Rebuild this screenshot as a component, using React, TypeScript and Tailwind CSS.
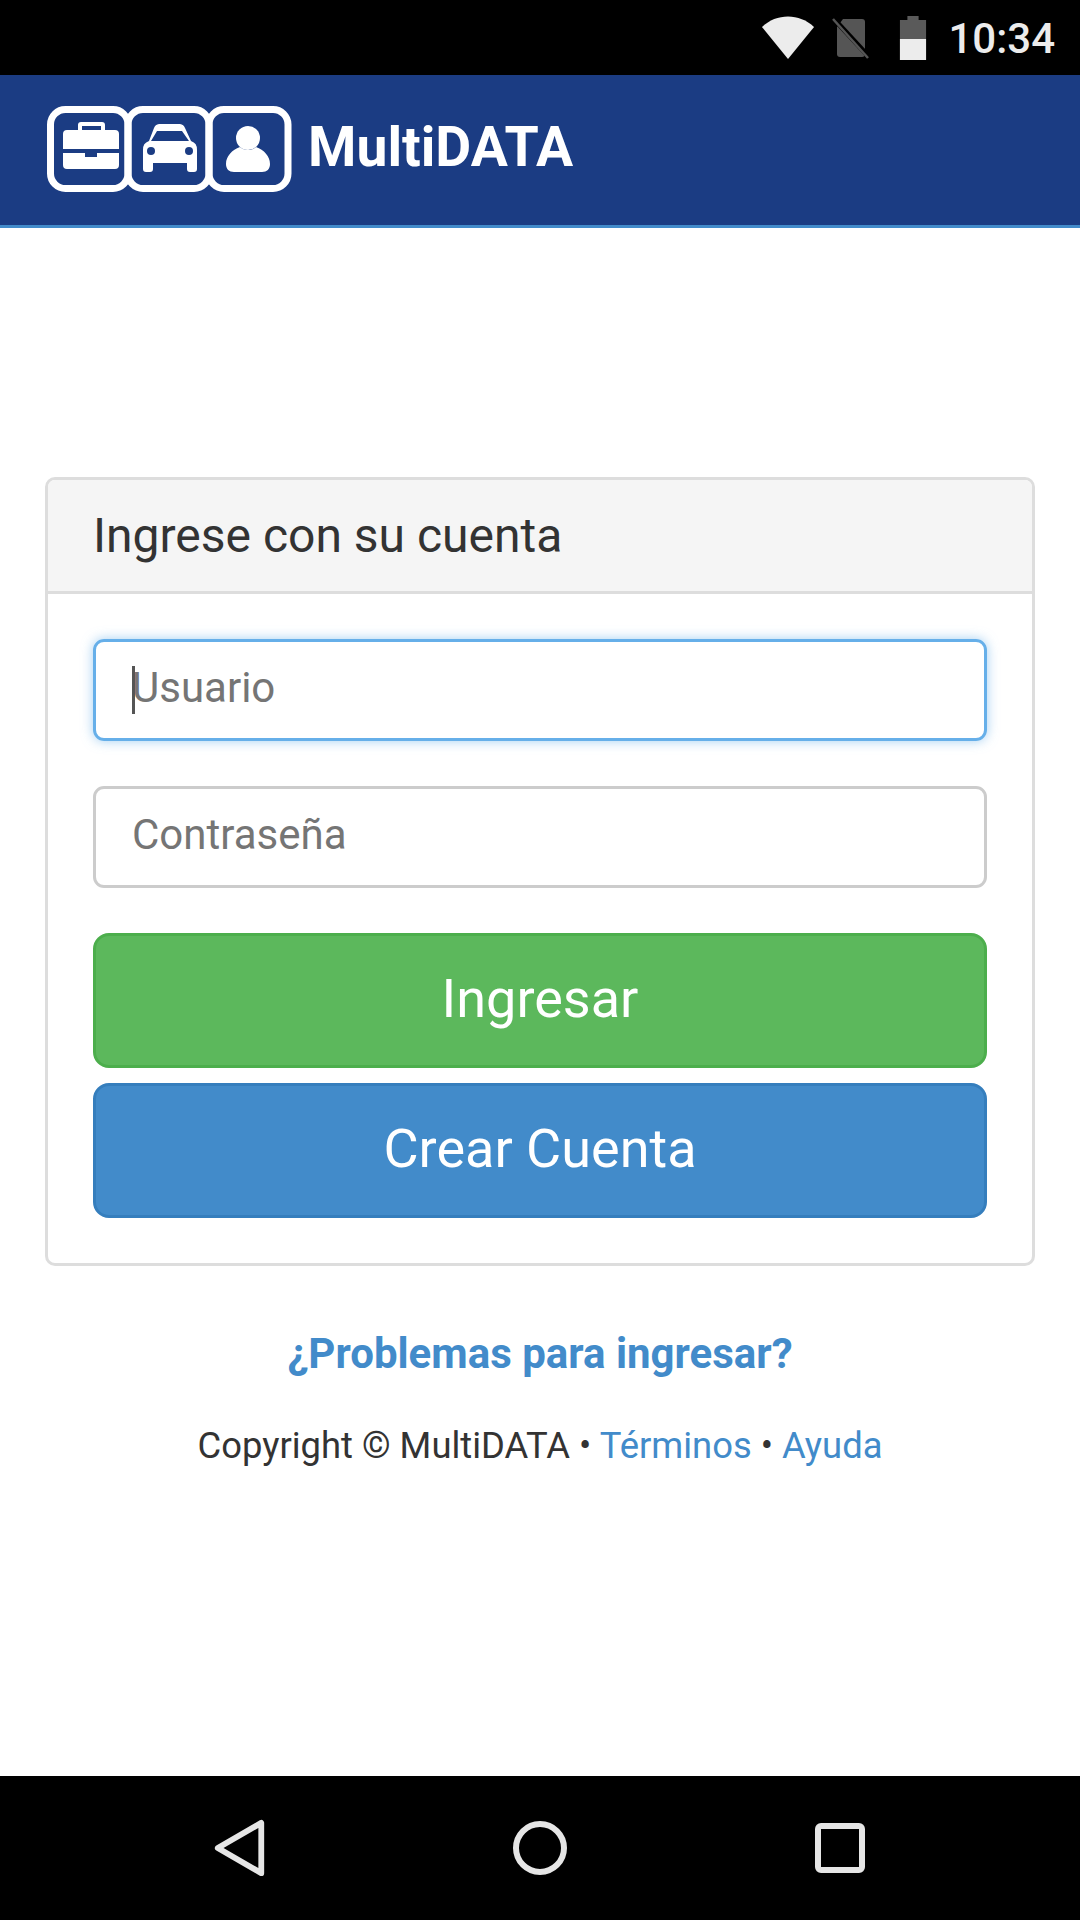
export default function App() {
  return (
    <div className="w-[1080px] h-[1920px] flex flex-col bg-white font-['Roboto',sans-serif] text-[#333] overflow-hidden">
      <div className="h-[75px] bg-black flex items-center justify-end pr-[25px] shrink-0">
        <svg width="54" height="44" viewBox="0 0 56 44" className="mr-[17px]" preserveAspectRatio="none">
          <path d="M1 11 C16 -3 40 -3 55 11 L28 43 Z" fill="#ececec" />
        </svg>
        <svg width="40" height="44" viewBox="0 0 40 44" className="mr-[27px]">
          <path d="M11 3 H30 a3 3 0 0 1 3 3 V38 a3 3 0 0 1 -3 3 H8 a3 3 0 0 1 -3 -3 V11 Z" fill="#555" />
          <path d="M1 2 L38 42" stroke="#000" strokeWidth="5" />
          <path d="M1 3 L36 42" stroke="#555" strokeWidth="2.5" />
        </svg>
        <svg width="28" height="44" viewBox="0 0 30 44" className="mr-[21px]" preserveAspectRatio="none">
          <path d="M9 0 H21 V4 H29 V44 H1 V4 H9 Z" fill="#5a5a5a" />
          <rect x="1" y="23" width="28" height="21" fill="#ececec" />
        </svg>
        <span className="text-[42px] leading-none font-medium text-[#ececec] mt-[3px]">10:34</span>
      </div>

      <div className="h-[153px] bg-[#1b3c83] border-b-[3px] border-[#428bca] flex items-center pl-[46px] shrink-0">
        <svg width="246" height="86" viewBox="0 0 246 86" className="mt-[-2px]">
          <g fill="none" stroke="#fff" strokeWidth="7">
            <rect x="4.5" y="3.5" width="77.5" height="79" rx="15" />
            <rect x="82" y="3.5" width="81" height="79" rx="15" />
            <rect x="163" y="3.5" width="79" height="79" rx="15" />
          </g>
          <g fill="#fff">
            <path d="M32 19 a3 3 0 0 1 3 -3 H56 a3 3 0 0 1 3 3 V24 H69 a4 4 0 0 1 4 4 V43 H17 V28 a4 4 0 0 1 4 -4 H32 Z M36 20 V24 H55 V20 Z" fillRule="evenodd" />
            <path d="M17 47 H39 V51 H51 V47 H73 V59 a4 4 0 0 1 -4 4 H21 a4 4 0 0 1 -4 -4 Z" />
            <path d="M103 35 L108 22 a6 6 0 0 1 5 -4 H134 a6 6 0 0 1 5 4 L145 35 a9 9 0 0 1 6 9 V56 H151 V63 a3 3 0 0 1 -3 3 H144 a3 3 0 0 1 -3 -3 V57 H107 V63 a3 3 0 0 1 -3 3 H100 a3 3 0 0 1 -3 -3 V56 V44 a9 9 0 0 1 6 -9 Z M105 35 H143 L136 25 H111 Z" fillRule="evenodd" />
            <circle cx="202" cy="32" r="12" />
            <path d="M180 58 C180 50 186 44 194 41 C198 45 206 45 210 41 C218 44 224 50 224 58 C224 63 221 66 216 66 H188 C183 66 180 63 180 58 Z" />
          </g>
          <circle cx="105" cy="45" r="4" fill="#1b3c83" />
          <circle cx="143" cy="45" r="4" fill="#1b3c83" />
        </svg>
        <span className="ml-[16px] text-[55.3px] leading-none font-bold text-white mt-[-4px]">MultiDATA</span>
      </div>

      <div className="flex-1 flex flex-col items-center pt-[249px]">
        <div className="w-[990px] h-[789px] border-[3px] border-[#ddd] rounded-[10px] bg-white overflow-hidden flex flex-col shrink-0">
          <div className="h-[114px] bg-[#f5f5f5] border-b-[3px] border-[#ddd] pl-[45px] flex items-center text-[48px] leading-none shrink-0">
            Ingrese con su cuenta
          </div>
          <div className="flex flex-col pt-[45px] px-[45px]">
            <div className="relative h-[102px] border-[3px] border-[#66afe9] rounded-[11px] shadow-[0_0_12px_rgba(102,175,233,0.6)] flex items-center pl-[36px] pb-[5px] text-[42px] text-[#757575]">
              <span className="absolute left-[36px] top-[24px] w-[3px] h-[48px] bg-[#555]" />
              Usuario
            </div>
            <div className="mt-[45px] h-[102px] border-[3px] border-[#ccc] rounded-[11px] flex items-center pl-[36px] pb-[5px] text-[42px] text-[#757575]">
              Contraseña
            </div>
            <div className="mt-[45px] h-[135px] bg-[#5cb85c] border-[3px] border-[#4cae4c] rounded-[16px] flex items-center justify-center pb-[5px] text-white text-[54px]">
              Ingresar
            </div>
            <div className="mt-[15px] h-[135px] bg-[#428bca] border-[3px] border-[#357ebd] rounded-[16px] flex items-center justify-center pb-[5px] text-white text-[54px]">
              Crear Cuenta
            </div>
          </div>
        </div>
        <div className="mt-[63px] text-[42px] leading-[50px] font-bold text-[#428bca]">¿Problemas para ingresar?</div>
        <div className="mt-[45px] text-[36.4px] leading-[44px]">
          Copyright © MultiDATA • <span className="text-[#428bca]">Términos</span> • <span className="text-[#428bca]">Ayuda</span>
        </div>
      </div>

      <div className="h-[144px] bg-black flex items-center justify-center shrink-0">
        <div className="w-[300px] flex items-center justify-center">
          <svg width="54" height="58" viewBox="0 0 54 60">
            <path d="M49 4 V56 L4 30 Z" fill="none" stroke="#e6e6e6" strokeWidth="6" strokeLinejoin="round" />
          </svg>
        </div>
        <div className="w-[300px] flex items-center justify-center">
          <svg width="56" height="56" viewBox="0 0 56 56">
            <circle cx="28" cy="28" r="24" fill="none" stroke="#e6e6e6" strokeWidth="6" />
          </svg>
        </div>
        <div className="w-[300px] flex items-center justify-center">
          <svg width="50" height="50" viewBox="0 0 50 50">
            <rect x="3" y="3" width="44" height="44" rx="3" fill="none" stroke="#e6e6e6" strokeWidth="6" />
          </svg>
        </div>
      </div>
    </div>
  );
}
